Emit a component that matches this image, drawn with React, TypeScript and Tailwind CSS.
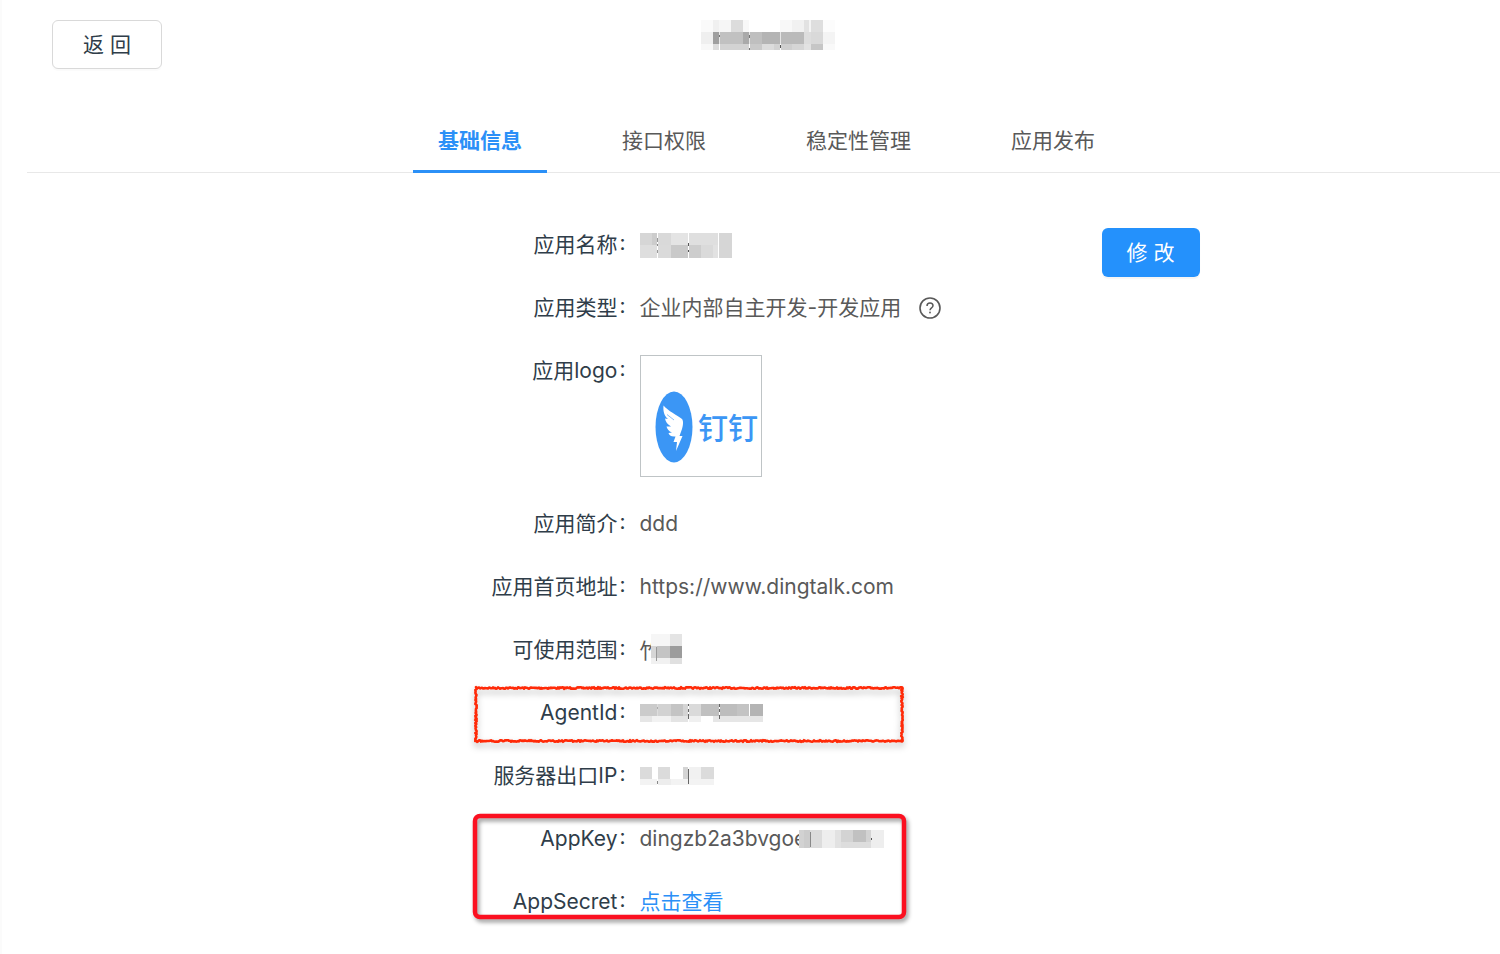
import type { ReactNode } from "react";

type Block = [x: number, y: number, w: number, h: number, fill: string];

function Mosaic({ label, width, height, blocks }: { label: string; width: number; height: number; blocks: Block[] }) {
  return (
    <svg role="img" aria-label={label} width={width} height={height} viewBox={`0 0 ${width} ${height}`} shapeRendering="crispEdges" className="block shrink-0">
      {blocks.map(([x, y, w, h, fill], i) => (
        <rect key={i} x={x} y={y} width={w} height={h} fill={fill} />
      ))}
    </svg>
  );
}

const titleBlocks: Block[] = [
  [0, 0, 12, 12, "#fafafa"], [12, 0, 6, 12, "#f0f0f0"], [18, 0, 12, 12, "#f6f6f6"], [30, 0, 12, 12, "#dcdcdc"],
  [42, 0, 6, 12, "#f8f8f8"], [79, 0, 12, 12, "#f8f8f8"], [91, 0, 12, 12, "#f1f1f1"], [103, 0, 5, 12, "#e2e2e2"],
  [108, 0, 2, 12, "#f4f4f4"], [110, 0, 12, 12, "#dedede"], [122, 0, 12, 12, "#fcfcfc"],
  [0, 12, 12, 12, "#efefef"], [12, 12, 6, 12, "#9f9f9f"], [18, 12, 1, 12, "#e6e6e6"], [19, 12, 23, 12, "#c1c1c1"],
  [42, 12, 6, 12, "#aaaaaa"], [48, 12, 1, 12, "#e6e6e6"], [49, 12, 12, 12, "#bfbfbf"], [61, 12, 18, 12, "#b4b4b4"],
  [79, 12, 1, 12, "#e6e6e6"], [80, 12, 23, 12, "#bababa"], [103, 12, 7, 12, "#dddddd"],
  [110, 12, 12, 12, "#d9d9d9"], [122, 12, 12, 12, "#f4f4f4"],
  [0, 24, 12, 6, "#f8f8f8"], [12, 24, 6, 6, "#dcdcdc"], [19, 24, 29, 6, "#d3d3d3"], [49, 24, 12, 6, "#c9c9c9"],
  [61, 24, 12, 6, "#dcdcdc"], [73, 24, 6, 6, "#d2d2d2"], [80, 24, 11, 6, "#cfcfcf"], [91, 24, 12, 6, "#d6d6d6"],
  [103, 24, 7, 6, "#e2e2e2"], [110, 24, 12, 6, "#c6c6c6"], [122, 24, 12, 6, "#f9f9f9"],
  [18, 15, 1, 2, "#777777"], [48, 15, 1, 3, "#777777"], [48, 28, 1, 2, "#777777"], [79, 25, 1, 3, "#555555"],
];

const nameBlocks: Block[] = [
  [0, 0, 12, 12, "#d6d6d6"], [12, 0, 5, 12, "#cccccc"], [18, 0, 13, 12, "#d9d9d9"], [31, 0, 17, 12, "#e4e4e4"],
  [49, 0, 29, 12, "#dfdfdf"], [79, 0, 13, 25, "#d6d6d6"], [0, 12, 17, 13, "#dedede"], [18, 12, 13, 13, "#dadada"],
  [31, 12, 17, 13, "#c9c9c9"], [49, 12, 12, 13, "#cdcdcd"], [61, 12, 12, 13, "#dadada"], [73, 12, 5, 13, "#e2e2e2"],
  [17, 5, 1, 4, "#999999"], [17, 11, 1, 2, "#888888"], [17, 17, 1, 3, "#999999"], [48, 10, 1, 3, "#555555"], [48, 17, 1, 2, "#555555"],
];

const scopeBlocks: Block[] = [
  [0, 0, 19, 12, "#f6f6f6"], [19, 0, 12, 12, "#e4e4e4"], [0, 12, 6, 12, "#d6d6d6"], [6, 12, 13, 12, "#c4c4c4"],
  [19, 12, 12, 12, "#9c9c9c"], [0, 24, 19, 6, "#f1f1f1"], [19, 24, 12, 6, "#e0e0e0"], [5, 13, 1, 14, "#999999"],
];

const agentBlocks: Block[] = [
  [0, 0, 17, 12, "#cbcbcb"], [17, 0, 1, 12, "#dddddd"], [18, 0, 13, 12, "#d2d2d2"], [31, 0, 12, 12, "#c4c4c4"],
  [43, 0, 5, 12, "#d4d4d4"], [49, 0, 12, 12, "#dadada"], [61, 0, 18, 12, "#c0c0c0"], [80, 0, 17, 12, "#bdbdbd"],
  [97, 0, 12, 12, "#c3c3c3"], [110, 0, 13, 12, "#b4b4b4"], [0, 12, 12, 6, "#e6e6e6"], [12, 12, 19, 6, "#f2f2f2"],
  [31, 12, 17, 6, "#e4e4e4"], [49, 12, 12, 6, "#f0f0f0"], [73, 12, 50, 6, "#e6e6e6"],
  [17, 3, 1, 2, "#aaaaaa"], [48, 0, 1, 2, "#666666"], [48, 5, 1, 3, "#666666"], [48, 10, 1, 5, "#666666"],
  [79, 0, 1, 3, "#666666"], [79, 5, 1, 3, "#666666"], [79, 11, 1, 4, "#666666"],
];

const ipBlocks: Block[] = [
  [0, 0, 12, 12, "#dbdbdb"], [18, 0, 12, 12, "#dbdbdb"], [43, 0, 5, 12, "#d4d4d4"], [49, 0, 12, 12, "#f1f1f1"],
  [61, 0, 13, 12, "#dbdbdb"], [0, 12, 17, 6, "#f3f3f3"], [31, 12, 43, 6, "#f3f3f3"], [18, 12, 13, 6, "#ededed"],
  [17, 14, 1, 3, "#888888"], [48, 2, 1, 15, "#666666"],
];

const keyBlocks: Block[] = [
  [0, 0, 5, 18, "#d2d2d2"], [5, 0, 6, 18, "#cccccc"], [11, 0, 12, 18, "#dcdcdc"], [23, 0, 13, 18, "#eeeeee"],
  [36, 0, 6, 18, "#e2e2e2"], [42, 0, 12, 12, "#d3d3d3"], [54, 0, 13, 12, "#c1c1c1"], [67, 0, 5, 12, "#d3d3d3"],
  [42, 12, 30, 6, "#dddddd"], [72, 0, 13, 18, "#eeeeee"], [11, 2, 1, 15, "#888888"], [72, 8, 1, 2, "#555555"],
];

// Deterministic hand-drawn outline running around a w × h rectangle.
function roughOutline(w: number, h: number) {
  const points: string[] = [];
  let seed = 7;
  const jitter = () => {
    seed = (seed * 16807) % 2147483647;
    return (seed / 2147483647 - 0.5) * 1.6;
  };
  for (let x = 0; x <= w; x += 1) points.push(`${4 + x} ${(4 + jitter()).toFixed(1)}`);
  for (let y = 0; y <= h; y += 1) points.push(`${(4 + w + jitter()).toFixed(1)} ${4 + y}`);
  for (let x = w; x >= 0; x -= 1) points.push(`${4 + x} ${(4 + h + jitter()).toFixed(1)}`);
  for (let y = h; y >= 0; y -= 1) points.push(`${(4 + jitter()).toFixed(1)} ${4 + y}`);
  return `M${points.join("L")}Z`;
}

const roughPath = roughOutline(426, 53);

function Row({ label, children, tall = false }: { label: string; children: ReactNode; tall?: boolean }) {
  return (
    <div className={tall ? "flex h-[153px] items-start" : "flex h-[63px] items-start"}>
      <dt className="flex h-8 w-[308px] shrink-0 items-center justify-end pr-[14px] text-[#2f3d49]">
        {label}
        <span className="ml-0.5 pb-1">:</span>
      </dt>
      <dd className="flex min-h-8 items-center whitespace-nowrap text-[#595959]">{children}</dd>
    </div>
  );
}

function DingLogo() {
  return (
    <svg role="img" aria-label="钉钉" viewBox="0 0 120 120" className="size-[120px]">
      <ellipse cx="33" cy="71" rx="18.500" ry="35.500" fill="#3b96f5" />
      <path
        d="M22.500 49.500C27 55 36 59 41 63C42.500 64.500 42.300 69 41 73L38.500 80H41.500L35 95L36 86H32.500L34.500 80.500C30 81 28 79 27.500 77L31 76.500C28 75.500 26 73 25.500 70.500L30 70.500C26.500 68.500 24.500 65.500 24 62.500L27 63C23 59.500 22 55 22.500 49.500Z"
        fill="#fff"
      />
      <path d="M26 58.500L33 64" stroke="#3b96f5" strokeWidth="0.600" />
      <text x="57" y="83" fontSize="30" fontWeight="500" fill="#3b96f5">钉钉</text>
    </svg>
  );
}

const tabs = ["基础信息", "接口权限", "稳定性管理", "应用发布"];

export default function App() {
  return (
    <div className="min-h-screen border-l-2 border-[#fbfbfb] bg-white pl-[25px] font-['Inter','Noto_Sans_CJK_SC',sans-serif] text-[21px] leading-8">
      <header className="grid grid-cols-[1fr_auto_1fr] items-start pt-5 pl-[25px]">
        <div>
          <button type="button" className="h-[49px] w-[110px] rounded-md border border-[#d9d9d9] bg-white text-[#2f3d49] shadow-[0_2px_1px_rgba(0,0,0,0.02)]">
            返 回
          </button>
        </div>
        <h1 className="-ml-4">
          <Mosaic label="应用" width={134} height={30} blocks={titleBlocks} />
        </h1>
      </header>

      <nav className="mt-[41px] border-b border-[#e8e8e8]" aria-label="应用设置">
        <ul className="-mb-px flex justify-center gap-[50px] pl-1.5">
          {tabs.map((tab, i) => (
            <li key={tab}>
              <a
                href="#"
                aria-current={i === 0 ? "page" : undefined}
                className={
                  i === 0
                    ? "block h-[63px] border-b-3 border-[#2b90f7] px-[25px] pt-[15px] font-bold text-[#2b90f7]"
                    : "block h-[63px] px-[25px] pt-[15px] text-[#595959]"
                }
              >
                {tab}
              </a>
            </li>
          ))}
        </ul>
      </nav>

      <div className="pt-[55px] pl-1">
        <main className="mx-auto flex max-w-[868px] items-start justify-between">
          <dl className="pt-px">
            <Row label="应用名称">
              <Mosaic label="应用名称" width={92} height={25} blocks={nameBlocks} />
            </Row>
            <Row label="应用类型">
              企业内部自主开发-开发应用
              <svg role="img" aria-label="帮助" viewBox="0 0 22 22" className="ml-[18px] size-[22px]" fill="none" stroke="#595959">
                <circle cx="11" cy="11" r="10" strokeWidth="1.600" />
                <path d="M8 9C8 7.200 9.300 6 11 6S14 7.200 14 8.800C14 10.800 11 11 11 13.200" strokeWidth="1.500" />
                <circle cx="11" cy="15.500" r="0.900" fill="#595959" stroke="none" />
              </svg>
            </Row>
            <Row label="应用logo" tall>
              <div className="size-[122px] border border-[#bfc4c6]">
                <DingLogo />
              </div>
            </Row>
            <Row label="应用简介">ddd</Row>
            <Row label="应用首页地址">https://www.dingtalk.com</Row>
            <Row label="可使用范围">
              <span>竹</span>
              <span className="z-10 -ml-[10px] pb-1">
                <Mosaic label="可使用范围" width={31} height={30} blocks={scopeBlocks} />
              </span>
            </Row>
            <div className="relative">
              <svg aria-hidden="true" width="440" height="68" viewBox="0 0 440 68" className="pointer-events-none absolute -top-[13px] left-[140px] overflow-visible drop-shadow-[0_4px_3px_rgba(0,0,0,0.25)]">
                <path d={roughPath} fill="none" stroke="#ff2a08" strokeWidth="2.600" strokeLinejoin="round" />
              </svg>
              <Row label="AgentId">
                <Mosaic label="AgentId" width={123} height={18} blocks={agentBlocks} />
              </Row>
            </div>
            <Row label="服务器出口IP">
              <Mosaic label="服务器出口IP" width={74} height={18} blocks={ipBlocks} />
            </Row>
            <div className="relative">
              <svg aria-hidden="true" width="434" height="108" viewBox="0 0 434 108" className="pointer-events-none absolute -top-[10px] left-[140px] overflow-visible drop-shadow-[2px_3px_2px_rgba(0,0,0,0.4)]">
                <rect x="3" y="3" width="429" height="101" rx="5" fill="none" stroke="#fb1020" strokeWidth="4.500" />
              </svg>
              <Row label="AppKey">
                <span>dingzb2a3bvgoe</span>
                <span className="z-10 -ml-[7px]">
                  <Mosaic label="AppKey" width={85} height={18} blocks={keyBlocks} />
                </span>
              </Row>
              <Row label="AppSecret">
                <a href="#" className="text-[#2b90f7]">点击查看</a>
              </Row>
            </div>
          </dl>
          <button type="button" className="h-[49px] w-[98px] rounded-md bg-[#2491fc] text-white shadow-[0_2px_1px_rgba(0,0,0,0.04)]">
            修 改
          </button>
        </main>
      </div>
    </div>
  );
}
